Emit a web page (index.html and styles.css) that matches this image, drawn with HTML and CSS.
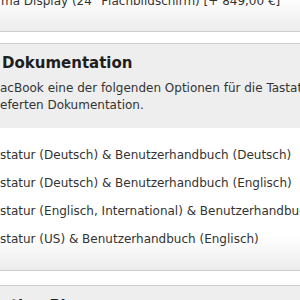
FILE: index.html
```html
<!DOCTYPE html>
<html lang="de">
<head>
  <meta charset="UTF-8">
  <title>Konfiguration</title>
  <link rel="stylesheet" href="styles.css">
</head>
<body>
  <div class="panel options prev">
    <div class="line">ma Display (24" Flachbildschirm) [+ 849,00 €]</div>
  </div>

  <div class="panel head">
    <h2 class="title">Dokumentation</h2>
    <p class="desc">acBook eine der folgenden Optionen für die Tastatur und die<br>eferten Dokumentation.</p>
  </div>

  <div class="panel options list">
    <div class="row">statur (Deutsch) &amp; Benutzerhandbuch (Deutsch)</div>
    <div class="row">statur (Deutsch) &amp; Benutzerhandbuch (Englisch)</div>
    <div class="row">statur (Englisch, International) &amp; Benutzerhandbuch (Englisch)</div>
    <div class="row">statur (US) &amp; Benutzerhandbuch (Englisch)</div>
  </div>

  <div class="panel head next">
    <h2 class="title">ction Plan</h2>
  </div>
</body>
</html>
```

FILE: styles.css
```css
body {
  margin: 0;
  background: #fff;
  font-family: "DejaVu Sans", Verdana, sans-serif;
  font-size: 12px;
  color: #333;
  overflow: hidden;
  white-space: nowrap;
}
.panel {
  width: 100%;
  box-sizing: border-box;
}
.options {
  background: linear-gradient(#fff calc(100% - 34px), #ececec);
  border-bottom: 1px solid #cdcdcd;
}
.prev {
  margin-top: -7px;
  height: 39px;
  margin-bottom: 11px;
  padding-left: 1px;
}
.line {
  line-height: 16px;
}
.list {
  padding: 13px 0 17px;
  margin-bottom: 14px;
}
.row {
  height: 28px;
  line-height: 28px;
}
.head {
  background: #eee;
  border-top: 1px solid #cdcdcd;
  padding: 10px 0 14px;
}
.next {
  padding-top: 11px;
}
.title {
  margin: 0 0 8px 2px;
  font-size: 15px;
  line-height: 18px;
  font-weight: bold;
  color: #1e1e1e;
}
.desc {
  margin: 0;
  line-height: 17px;
}
```
